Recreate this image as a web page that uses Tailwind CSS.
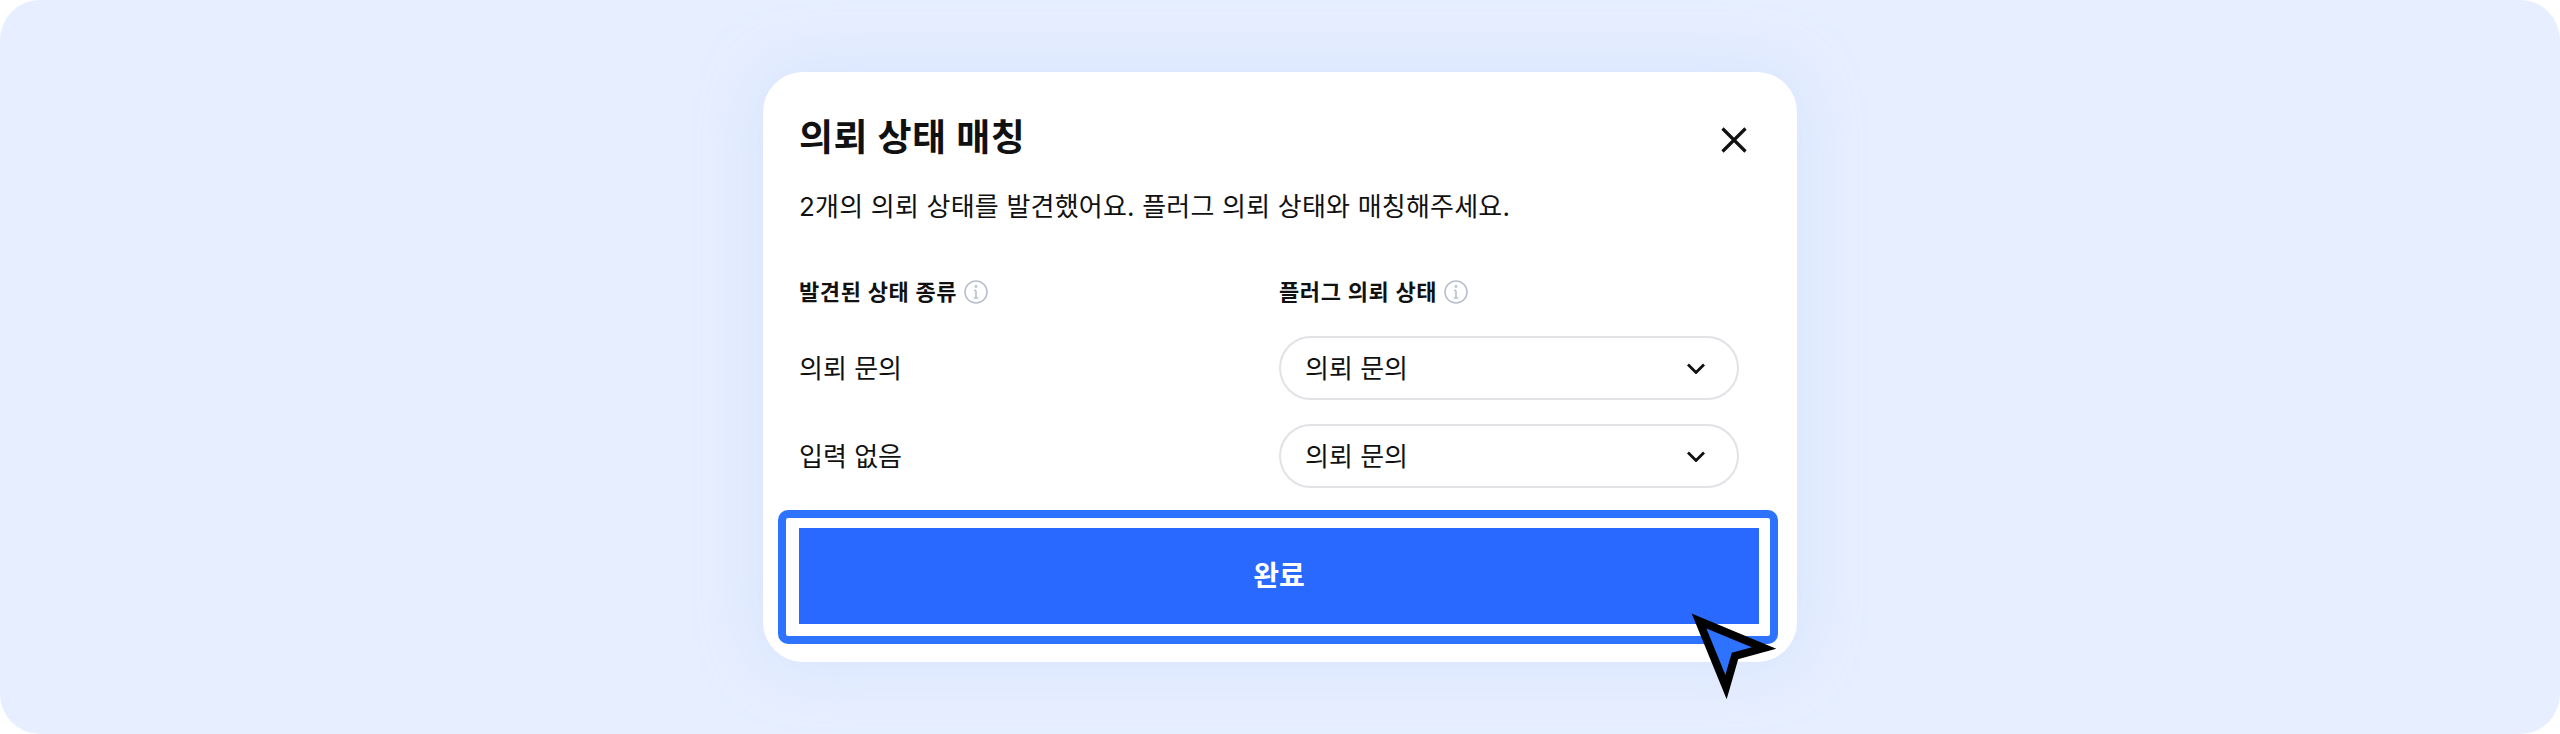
<!DOCTYPE html>
<html lang="ko">
<head>
<meta charset="utf-8">
<script src="https://cdn.jsdelivr.net/npm/@tailwindcss/browser@4"></script>
</head>
<body class="bg-white">
<div class="relative flex h-[734px] w-[2560px] items-start justify-center overflow-hidden rounded-[40px] bg-[#e6eeff] pt-[72px] font-['Inter','Noto_Sans_CJK_KR',sans-serif] text-[#111111]">
  <div class="relative flex h-[590px] w-[1034px] flex-col rounded-[40px] bg-white pr-[50px] pl-[36px] shadow-[0_0_60px_rgba(200,220,253,0.6)]">
    <div class="flex items-center justify-between pt-[41px]">
      <h2 class="text-[37px] leading-[50px] font-semibold tracking-[0.4px]">의뢰 상태 매칭</h2>
      <svg class="mt-[3px]" width="26" height="26" viewBox="0 0 26 26" fill="none" stroke="#111111" stroke-width="3.2"><path d="M1.5 1.5 24.5 24.5M24.5 1.5 1.5 24.5"/></svg>
    </div>
    <p class="mt-[26px] text-[26px] leading-[36px] tracking-[0.2px]">2개의 의뢰 상태를 발견했어요. 플러그 의뢰 상태와 매칭해주세요.</p>
    <div class="mt-[52px] grid grid-cols-[480px_1fr]">
      <div class="flex h-[30px] items-center gap-[7px] text-[22px] font-semibold tracking-[0.6px]">발견된 상태 종류
        <svg width="24" height="24" viewBox="0 0 24 24" fill="none" stroke="#b9c0cc" stroke-width="1.6"><circle cx="12" cy="12" r="11"/><path d="M12 10.5V18M10 10.5h2M10 18h4"/><circle cx="12" cy="6.5" r=".6"/></svg>
      </div>
      <div class="flex h-[30px] items-center gap-[7px] text-[22px] font-semibold tracking-[0.6px]">플러그 의뢰 상태
        <svg width="24" height="24" viewBox="0 0 24 24" fill="none" stroke="#b9c0cc" stroke-width="1.6"><circle cx="12" cy="12" r="11"/><path d="M12 10.5V18M10 10.5h2M10 18h4"/><circle cx="12" cy="6.5" r=".6"/></svg>
      </div>
    </div>
    <div class="mt-[29px] grid grid-cols-[480px_460px] items-center gap-y-[24px] text-[26px]">
      <span>의뢰 문의</span>
      <div class="flex h-[64px] items-center justify-between rounded-full border-2 border-[#e2e2e6] pr-[31px] pl-[24px]">의뢰 문의
        <svg width="20" height="11" viewBox="0 0 20 11" fill="none" stroke="#111111" stroke-width="2.8"><path d="M2 1.5l8 8 8-8"/></svg>
      </div>
      <span>입력 없음</span>
      <div class="flex h-[64px] items-center justify-between rounded-full border-2 border-[#e2e2e6] pr-[31px] pl-[24px]">의뢰 문의
        <svg width="20" height="11" viewBox="0 0 20 11" fill="none" stroke="#111111" stroke-width="2.8"><path d="M2 1.5l8 8 8-8"/></svg>
      </div>
    </div>
    <div class="mt-[22px] ml-[-21px] flex h-[134px] w-[1000px] shrink-0 items-center rounded-[10px] border-[8px] border-[#2e73ff] bg-white pb-[2px] pl-[13px]">
      <div class="flex h-[96px] w-[960px] items-center justify-center bg-[#2969ff] text-[28px] font-semibold text-white">완료</div>
    </div>
  </div>
  <svg class="absolute left-[1680px] top-[600px]" width="110" height="110" viewBox="1680 600 110 110" fill="#2e73ff" stroke="#000" stroke-width="8" stroke-miterlimit="10"><path d="M1699 621 1764 648 1735 656 1726 687Z"/></svg>
</div>
</body>
</html>
